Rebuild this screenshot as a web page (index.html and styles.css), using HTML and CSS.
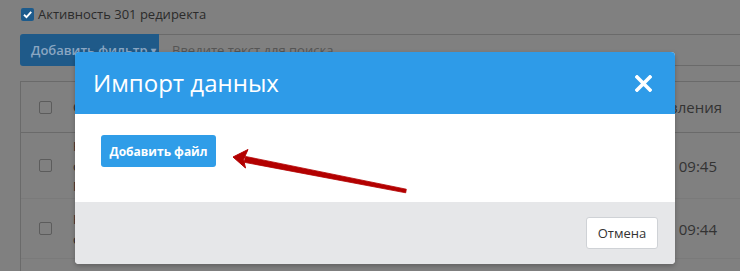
FILE: index.html
```html
<!DOCTYPE html>
<html lang="ru">
<head>
<meta charset="utf-8">
<title>Импорт данных</title>
<link rel="stylesheet" href="styles.css">
</head>
<body>
<div class="page">
  <label class="check-row">
    <span class="cb cb-on"><svg viewBox="0 0 13 13" width="13" height="13"><path d="M3 6.7 L5.5 9.1 L10.2 3.8" fill="none" stroke="#fff" stroke-width="1.9"/></svg></span>
    <span>Активность 301 редиректа</span>
  </label>
  <div class="filter-row">
    <div class="filter-btn">Добавить фильтр <span class="caret">▾</span></div>
    <div class="search">Введите текст для поиска</div>
  </div>
  <div class="table">
    <div class="tr th">
      <div class="c-check"><span class="cb"></span></div>
      <div class="c-main"><span>Ссылка</span></div>
      <div class="c-date"><span>Дата обновления</span></div>
    </div>
    <div class="tr r1">
      <div class="c-check"><span class="cb"></span></div>
      <div class="c-main lines"><span>Новая</span><span>ссылка</span><span>Правило</span></div>
      <div class="c-date"><span>15.03.2021 09:45</span></div>
    </div>
    <div class="tr r2">
      <div class="c-check"><span class="cb"></span></div>
      <div class="c-main lines"><span>Новая</span><span>ссылка</span></div>
      <div class="c-date"><span>15.03.2021 09:44</span></div>
    </div>
    <div class="tr r3"></div>
  </div>
</div>

<div class="modal">
  <div class="modal-head">
    <div class="modal-title">Импорт данных</div>
    <svg class="close" viewBox="0 0 17 17" width="17" height="17"><path d="M2 2 L15 15 M15 2 L2 15" stroke="#fff" stroke-width="3.6" stroke-linecap="square"/></svg>
  </div>
  <div class="modal-body">
    <div class="btn-primary">Добавить файл</div>
  </div>
  <div class="modal-foot">
    <div class="btn-default">Отмена</div>
  </div>
</div>

<svg class="arrow" width="740" height="271" viewBox="0 0 740 271">
  <polygon points="244.2,162.3 245.4,156.4 406.3,189.2 405.7,192.8" fill="#b30000" stroke="#b30000" stroke-width="0.8" stroke-linejoin="round"/>
  <polygon points="233,157 248,149.5 243.5,159.5 245.5,168" fill="#b30000" stroke="#b30000" stroke-width="1" stroke-linejoin="round"/>
</svg>
</body>
</html>
```

FILE: styles.css
```css
* { box-sizing: border-box; }
html, body {
  margin: 0;
  padding: 0;
  width: 740px;
  height: 271px;
  overflow: hidden;
}
body {
  background: #808080;
  font-family: "Open Sans", "Noto Sans", sans-serif;
  color: #2a2a2a;
  position: relative;
}
.page {
  padding: 5px 0 0 20px;
}
.check-row {
  display: flex;
  align-items: center;
  gap: 4px;
  height: 18px;
  font-size: 13px;
  color: #2b2b2b;
  padding-left: 1px;
}
.cb {
  display: inline-flex;
  width: 13px;
  height: 13px;
  border: 1px solid #5c5c5c;
  border-radius: 2px;
  flex: none;
}
.cb-on {
  background: #1d5b8c;
  border: none;
  align-items: center;
  justify-content: center;
}
.filter-row {
  display: flex;
  margin-top: 11px;
  height: 32px;
}
.filter-btn {
  width: 139px;
  background: #1f5a89;
  border-radius: 3px 0 0 3px;
  color: #8aa6c2;
  font-size: 13px;
  font-weight: 600;
  display: flex;
  align-items: center;
  padding-left: 11px;
  flex: none;
  white-space: nowrap;
}
.caret { font-size: 10px; margin-left: 3px; }
.search {
  flex: 1;
  border-top: 1px solid #6a6a6a;
  border-bottom: 1px solid #6a6a6a;
  color: #555;
  font-size: 13px;
  display: flex;
  align-items: center;
  padding-left: 13px;
}
.table {
  margin-top: 15px;
  border-top: 1px solid #6a6a6a;
  border-left: 1px solid #6a6a6a;
  width: 740px;
}
.tr {
  display: flex;
  align-items: center;
  border-bottom: 1px solid #6a6a6a;
}
.th { height: 51px; }
.r1 { height: 66px; border-bottom-color: #7a7a7a; }
.r2 { height: 60px; border-bottom-color: #7a7a7a; }
.r3 { height: 20px; border-bottom: none; }
.c-check {
  width: 52px;
  display: flex;
  padding-left: 18px;
}
.c-main {
  flex: 1;
  font-size: 13px;
  color: #2a2a2a;
}
.lines {
  display: flex;
  flex-direction: column;
  line-height: 20px;
}
.c-date {
  width: 200px;
  font-size: 15px;
  color: #333;
  display: flex;
  justify-content: flex-end;
  white-space: nowrap;
}
.th .c-date { padding-right: 38px; }
.r1 .c-date, .r2 .c-date { padding-right: 43px; }

.modal {
  position: absolute;
  left: 75px;
  top: 52px;
  width: 600px;
  height: 212px;
  background: #fff;
  border-radius: 4px;
  overflow: hidden;
  display: flex;
  flex-direction: column;
  box-shadow: 0 2px 5px rgba(0,0,0,0.25);
}
.modal-head {
  height: 62px;
  background: #2e9be8;
  display: flex;
  align-items: center;
  justify-content: space-between;
  padding: 0 23px 0 18px;
  flex: none;
}
.modal-title {
  color: #fff;
  font-size: 24px;
  line-height: 30px;
  margin-top: -1px;
}
.close { display: block; }
.modal-body {
  height: 88px;
  padding: 21px 0 0 26px;
  flex: none;
}
.btn-primary {
  width: 115px;
  height: 32px;
  background: #2f9de8;
  border-radius: 3px;
  color: #fff;
  font-size: 12px;
  font-weight: 700;
  display: flex;
  align-items: center;
  justify-content: center;
}
.modal-foot {
  flex: 1;
  background: #e6e7e9;
  display: flex;
  justify-content: flex-end;
  padding: 15px 17px 0 0;
}
.btn-default {
  width: 72px;
  height: 32px;
  background: #fff;
  border: 1px solid #cfd2d6;
  border-radius: 3px;
  color: #333;
  font-size: 13px;
  display: flex;
  align-items: center;
  justify-content: center;
}
.arrow {
  position: absolute;
  left: 0;
  top: 0;
  pointer-events: none;
}
```
